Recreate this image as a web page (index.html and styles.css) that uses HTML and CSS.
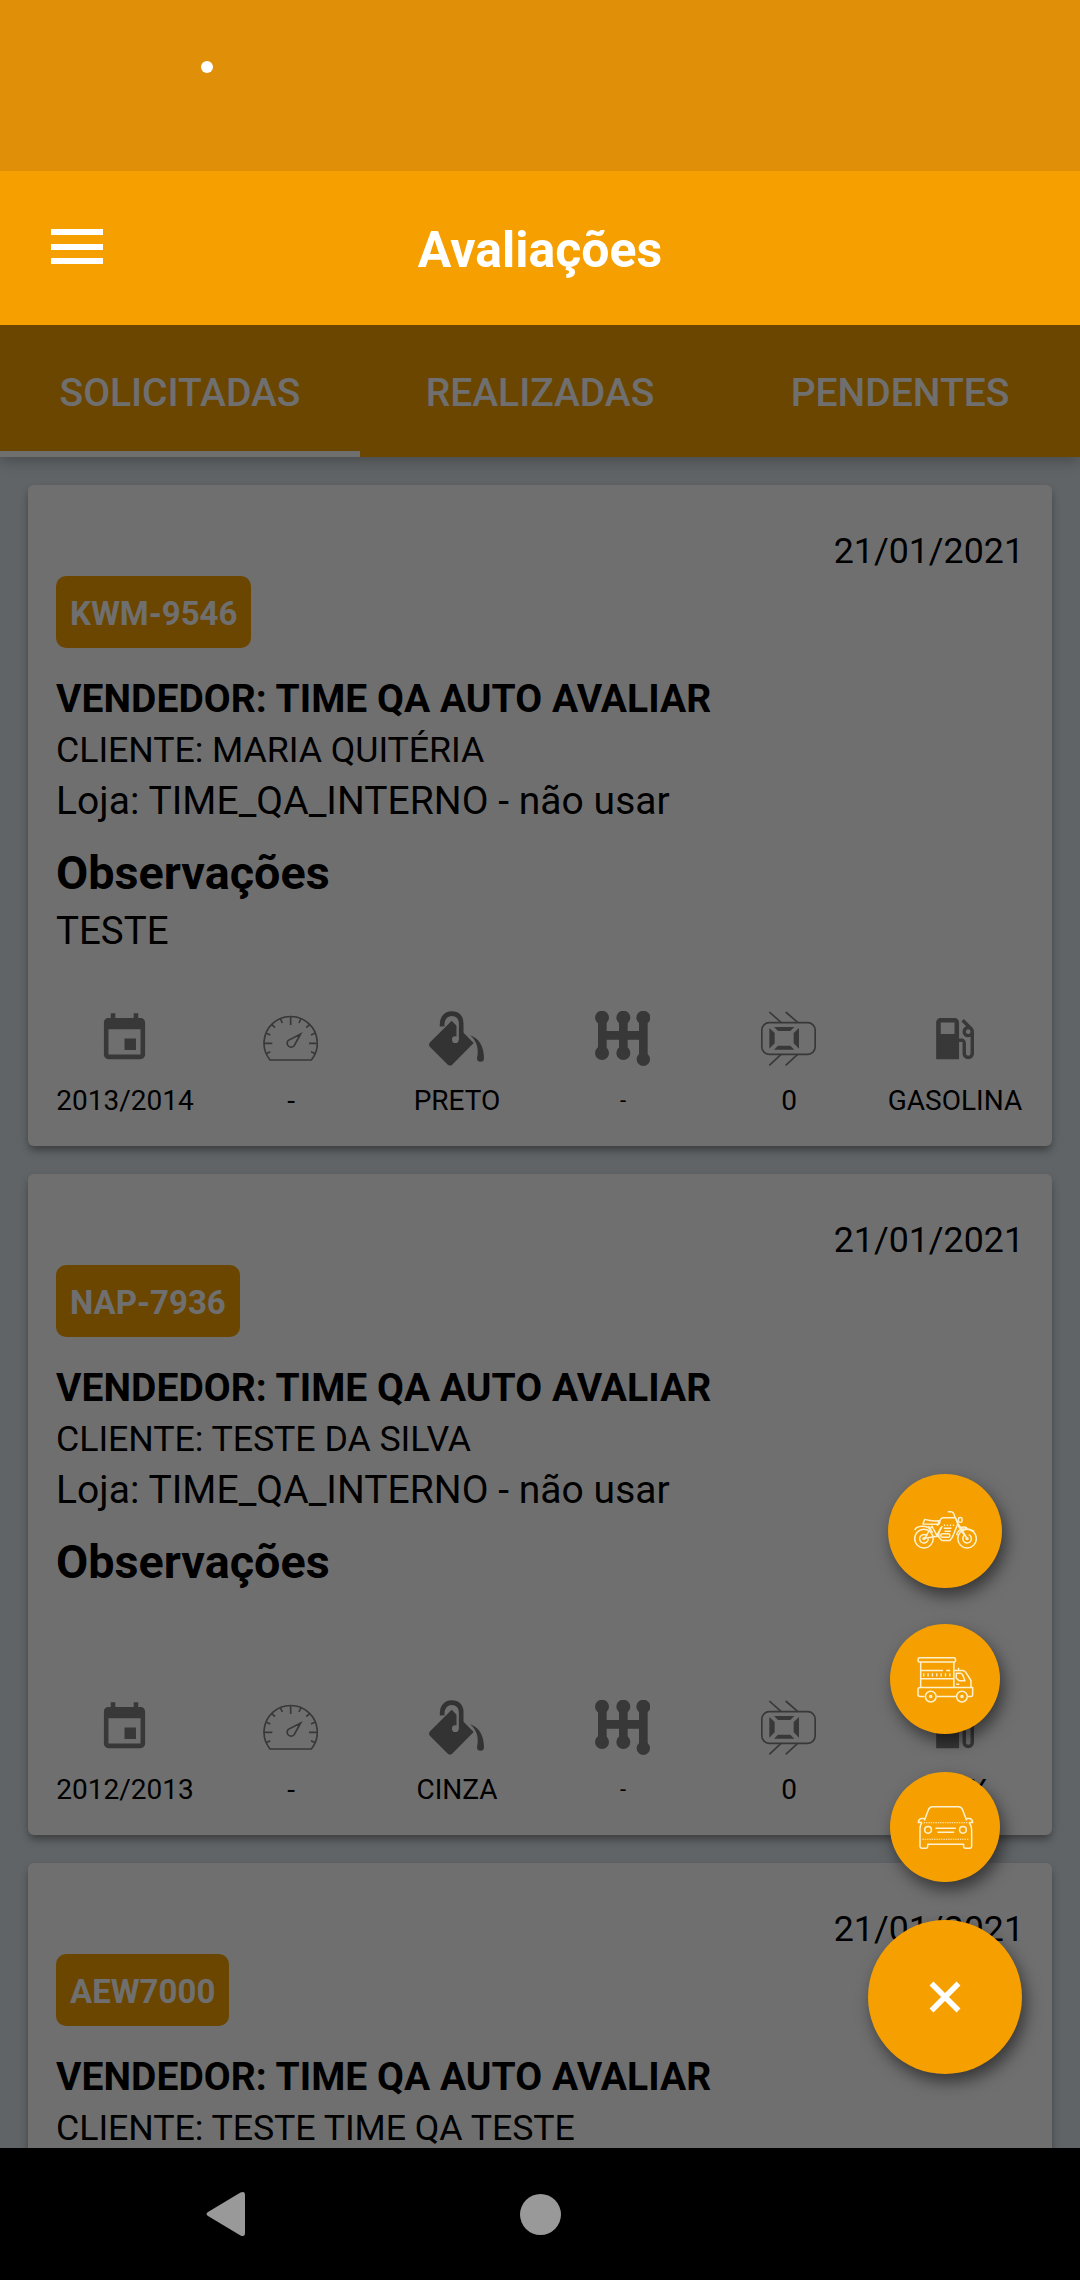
FILE: index.html
```html
<!DOCTYPE html>
<html lang="pt-BR">
<head>
<meta charset="utf-8">
<title>Avaliações</title>
<link rel="stylesheet" href="styles.css">
</head>
<body>
<svg class="defs" width="0" height="0">
  <symbol id="event" viewBox="0 0 24 24"><path fill="currentColor" d="M17 12h-5v5h5v-5zM16 1v2H8V1H6v2H5c-1.110 0-1.990.9-1.990 2L3 19c0 1.100.89 2 2 2h14c1.100 0 2-.9 2-2V5c0-1.100-.9-2-2-2h-1V1h-2zm3 18H5V8h14v11z"/></symbol>
  <symbol id="gauge" viewBox="0 0 165 165"><g fill="none" stroke="currentColor" stroke-width="5"><path d="M21 147A80 80 0 1 1 145 147Z"/><path d="M3 97h25M138 97h25M83 17v25M108 36l6-13M130 50l10-10M144 72l13-6M144 122l13 6M58 36l-6-13M36 50L26 40M22 72L9 66M22 122l-13 6M113 69L76 88A12 12 0 1 0 93 105Z"/></g></symbol>
  <symbol id="paint" viewBox="0 0 165 165"><path fill="currentColor" d="M68 29L134 96L71 160Q63 168 55 160L4 109Q-4 101 4 93Z"/><path fill="none" stroke="currentColor" stroke-width="15" d="M40 46C38 22 50 8 68 8C86 8 96 19 96 36V68"/><path fill="none" stroke="#fff" stroke-width="7" d="M50 44C50 26 58 19 68 19C80 19 86 27 86 40V86"/><circle cx="79" cy="86" r="10" fill="#fff"/><path fill="currentColor" d="M122 72C150 82 165 105 165 142A10.500 10.500 0 0 1 144 142C150 115 145 90 122 72"/></symbol>
  <symbol id="gear" viewBox="0 0 165 165"><g fill="currentColor"><circle cx="21" cy="20" r="21"/><circle cx="85" cy="20" r="21"/><circle cx="145" cy="20" r="21"/><circle cx="21" cy="126" r="21"/><circle cx="85" cy="126" r="21"/><circle cx="145" cy="145" r="20"/><path d="M9 20h26v106H9zM72 20h26v106H72zM132 20h26v125h-26zM20 60h125v26H20z"/></g></symbol>
  <symbol id="doors" viewBox="0 0 165 165"><rect x="2.500" y="35" width="160" height="95" rx="22" fill="none" stroke="currentColor" stroke-width="5"/><path fill="none" stroke="currentColor" stroke-width="5" d="M25 3L60 34M74 3L110 34M60 130L25 163M110 130L74 163"/><path fill="currentColor" d="M39 48h61L88 60H51zM51 104h37l12 12H39zM25 51l16 15v31l-16 16zM114 51L98 66v31l16 16z"/></symbol>
  <symbol id="fuel" viewBox="0 0 24 24"><path fill="currentColor" d="M19.770 7.230l.01-.01-3.720-3.720L15 4.560l2.110 2.110c-.94.36-1.610 1.260-1.610 2.330 0 1.380 1.120 2.500 2.500 2.500.36 0 .69-.08 1-.21v7.210c0 .55-.45 1-1 1s-1-.45-1-1V14c0-1.100-.9-2-2-2h-1V5c0-1.100-.9-2-2-2H6c-1.100 0-2 .9-2 2v16h10v-7.500h1.500v5c0 1.380 1.120 2.500 2.500 2.500s2.500-1.120 2.500-2.500V9c0-.69-.28-1.320-.73-1.770zM12 10H6V5h6v5zm6 0c-.55 0-1-.45-1-1s.45-1 1-1 1 .45 1 1-.45 1-1 1z"/></symbol>
</svg>

<div class="status-bar"><span class="status-dot"></span></div>

<header class="app-bar">
  <div class="menu"><span></span><span></span><span></span></div>
  <h1 class="title">Avaliações</h1>
</header>

<main class="screen">
  <nav class="tabs">
    <div class="tab active">SOLICITADAS</div>
    <div class="tab">REALIZADAS</div>
    <div class="tab">PENDENTES</div>
  </nav>

  <div class="list">
    <article class="card">
      <div class="date">21/01/2021</div>
      <div class="plate">KWM-9546</div>
      <div class="seller">VENDEDOR: TIME QA AUTO AVALIAR</div>
      <div class="client">CLIENTE: MARIA QUITÉRIA</div>
      <div class="store">Loja: TIME_QA_INTERNO - não usar</div>
      <h2 class="notes-title">Observações</h2>
      <div class="notes">TESTE</div>
      <div class="specs">
        <div class="spec"><svg><use href="#event"/></svg><span>2013/2014</span></div>
        <div class="spec"><svg><use href="#gauge"/></svg><span>-</span></div>
        <div class="spec dark"><svg><use href="#paint"/></svg><span>PRETO</span></div>
        <div class="spec"><svg><use href="#gear"/></svg><span class="small">-</span></div>
        <div class="spec"><svg><use href="#doors"/></svg><span>0</span></div>
        <div class="spec"><svg><use href="#fuel"/></svg><span>GASOLINA</span></div>
      </div>
    </article>

    <article class="card">
      <div class="date">21/01/2021</div>
      <div class="plate">NAP-7936</div>
      <div class="seller">VENDEDOR: TIME QA AUTO AVALIAR</div>
      <div class="client">CLIENTE: TESTE DA SILVA</div>
      <div class="store">Loja: TIME_QA_INTERNO - não usar</div>
      <h2 class="notes-title">Observações</h2>
      <div class="specs">
        <div class="spec"><svg><use href="#event"/></svg><span>2012/2013</span></div>
        <div class="spec"><svg><use href="#gauge"/></svg><span>-</span></div>
        <div class="spec dark"><svg><use href="#paint"/></svg><span>CINZA</span></div>
        <div class="spec"><svg><use href="#gear"/></svg><span class="small">-</span></div>
        <div class="spec"><svg><use href="#doors"/></svg><span>0</span></div>
        <div class="spec"><svg><use href="#fuel"/></svg><span>FLEX</span></div>
      </div>
    </article>

    <article class="card">
      <div class="date">21/01/2021</div>
      <div class="plate">AEW7000</div>
      <div class="seller">VENDEDOR: TIME QA AUTO AVALIAR</div>
      <div class="client">CLIENTE: TESTE TIME QA TESTE</div>
    </article>
  </div>

  <div class="scrim"></div>

  <div class="fab-menu">
    <div class="fab moto">
      <svg width="63" height="40" viewBox="160 208 190 120" fill="none" stroke="#fff1cf" stroke-width="4.500" stroke-linejoin="round">
        <circle cx="190" cy="294" r="28"/><path d="M200 286A13 13 0 1 0 203 294"/><circle cx="190" cy="294" r="3"/>
        <circle cx="320" cy="294" r="28"/><path d="M311 285A13 13 0 1 0 325 282"/><circle cx="320" cy="294" r="3"/>
        <path d="M162 268C168 254 198 252 208 266"/>
        <path d="M187 250L192 236Q212 242 236 240L232 251Z"/>
        <path d="M229 255L237 248Q238 232 248 231H285L292 250L276 289L268 300H244L235 290V276L245 256"/>
        <path d="M192 293L214 256L229 284L242 260M192 293L236 286M204 256L216 276"/>
        <path d="M262 213H272Q280 214 283 228L294 250L320 293M290 250L313 286"/>
        <rect x="294" y="230" width="11" height="15" rx="5"/>
        <path d="M300 262Q310 256 320 262M289 284C290 264 318 258 342 272"/>
        <path d="M250 254H282" stroke-dasharray="4 5"/>
        <path d="M250 263H273M252 272H271"/>
        <rect x="241" y="279" width="27" height="11" rx="5"/>
      </svg>
    </div>
    <div class="fab truck">
      <svg width="57" height="47" viewBox="170 646 170 140" fill="none" stroke="#fff1cf" stroke-width="4.500" stroke-linejoin="round">
        <rect x="173" y="651" width="112" height="13" rx="5"/>
        <path d="M181 664V740M280 664V740M183 689H248M257 689H269M183 714H278"/>
        <path d="M188 702H274" stroke-width="10" stroke-dasharray="4 9"/>
        <path d="M192 767H179Q173 767 173 761V746Q173 740 179 740H336V761Q336 767 331 767H322M286 767H229"/>
        <circle cx="211" cy="767" r="16"/><circle cx="211" cy="767" r="3"/>
        <circle cx="304" cy="767" r="16"/><circle cx="304" cy="767" r="3"/>
        <path d="M281 689H307Q312 690 315 694L331 719V740M287 697H300Q304 698 306 702L313 720H296L287 712ZM294 688V681M287 730H296"/>
      </svg>
    </div>
    <div class="fab car">
      <svg width="57" height="45" viewBox="230 194 170 134" fill="none" stroke="#fff1cf" stroke-width="4.500" stroke-linejoin="round">
        <path d="M252 240L264 208Q267 199 276 199H354Q363 199 366 208L378 240"/>
        <path d="M253 234H243Q235 235 234 246H245M377 234H387Q395 235 396 246H385"/>
        <path d="M245 246Q238 254 239 272V318Q239 323 244 323H257Q262 323 262 318V311H369V318Q369 323 374 323H388Q393 323 393 318V272Q393 254 385 246"/>
        <path d="M250 247H380M246 296H386" stroke-dasharray="4 3" stroke-width="3"/>
        <circle cx="263" cy="268" r="10"/><circle cx="367" cy="268" r="10"/>
        <path d="M285 263H346M291 275H341"/>
      </svg>
    </div>
    <div class="fab main">
      <svg width="32" height="32" viewBox="0 0 32 32" stroke="#fff" stroke-width="5.500"><path d="M2.500 2.500L29.500 29.500M29.500 2.500L2.500 29.500"/></svg>
    </div>
  </div>
</main>

<footer class="nav-bar">
  <svg width="40" height="46" viewBox="0 0 40 46" fill="#999"><path d="M34.500 1.600Q39 -0.500 39 4V42Q39 46.500 34.500 44.400L2 25Q-1 23 2 21Z"/></svg>
  <span class="home"></span>
</footer>
</body>
</html>
```
FILE: styles.css
```css
* { box-sizing: border-box; margin: 0; padding: 0; }

body {
  width: 1080px;
  height: 2280px;
  display: flex;
  flex-direction: column;
  overflow: hidden;
  background: #000;
  font-family: Roboto, "Liberation Sans", sans-serif;
  color: #000;
}

.defs { position: absolute; }

.status-bar {
  height: 171px;
  padding: 61px 0 0 201px;
  background: #e09008;
}
.status-dot {
  display: block;
  width: 12px;
  height: 12px;
  border-radius: 50%;
  background: #fff;
}

.app-bar {
  height: 154px;
  display: grid;
  grid-template-columns: 120px 1fr 120px;
  align-items: center;
  background: #f5a000;
}
.menu {
  display: flex;
  flex-direction: column;
  gap: 8.5px;
  margin: -3px 0 0 51px;
  width: 52px;
}
.menu span { height: 6px; background: #fff; }
.title {
  padding-top: 3px;
  text-align: center;
  font-size: 50px;
  line-height: 60px;
  font-weight: 700;
  color: #fff;
}

.screen {
  position: relative;
  height: 1823px;
  display: flex;
  flex-direction: column;
  overflow: hidden;
  background: #dde5ea;
}

.tabs {
  height: 132px;
  flex: none;
  display: grid;
  grid-template-columns: repeat(3, 1fr);
  background: #f5a000;
  box-shadow: 0 4px 14px rgba(0, 0, 0, .25);
}
.tab {
  padding-top: 10px;
  border-bottom: 6px solid transparent;
  text-align: center;
  line-height: 116px;
  font-size: 39px;
  font-weight: 500;
  color: #fff;
}
.tab.active { border-bottom-color: #fff; }

.list {
  flex: 1;
  display: flex;
  flex-direction: column;
  gap: 28px;
  padding: 28px;
}
.card {
  height: 661px;
  flex: none;
  display: flex;
  flex-direction: column;
  align-items: flex-start;
  padding: 45px 28px 27px;
  border-radius: 6px;
  background: #fff;
  box-shadow: 0 5px 8px -1px rgba(0, 0, 0, .4);
}
.date {
  align-self: flex-end;
  font-size: 35.75px;
  line-height: 42px;
}
.plate {
  height: 72px;
  margin-top: 4px;
  padding: 3px 14px 0;
  border-radius: 10px;
  background: #f5a000;
  font-size: 33px;
  line-height: 69px;
  font-weight: 700;
  color: #fff;
}
.seller, .client, .store {
  font-size: 39px;
  line-height: 51px;
  letter-spacing: .04px;
}
.seller { margin-top: 26px; font-weight: 700; }
.client {
  font-size: 35.75px;
  letter-spacing: -.07px;
}
.notes-title {
  margin-top: 18px;
  font-size: 46.75px;
  line-height: 56px;
}
.notes {
  margin-top: 4px;
  font-size: 38.5px;
  line-height: 52px;
}

.specs {
  align-self: stretch;
  display: grid;
  grid-template-columns: repeat(6, 166px);
  margin: auto -14px 0;
}
.spec {
  display: flex;
  flex-direction: column;
  align-items: center;
  gap: 17px;
  color: #808080;
}
.spec.dark { color: #757575; }
.spec svg { width: 55px; height: 55px; margin-right: 1px; }
.spec span {
  font-size: 28px;
  line-height: 36px;
  color: #000;
}
.spec .small { font-size: 22px; }

.scrim {
  position: absolute;
  inset: 0;
  background: rgba(0, 0, 0, .565);
}

.fab-menu {
  position: absolute;
  right: 58px;
  bottom: 74px;
  display: flex;
  flex-direction: column;
  align-items: center;
  gap: 38px;
}
.fab {
  width: 110px;
  height: 110px;
  display: flex;
  align-items: center;
  justify-content: center;
  border-radius: 50%;
  background: #f5a000;
  box-shadow: 4px 8px 16px rgba(0, 0, 0, .5);
}
.fab.moto { width: 114px; height: 114px; margin-bottom: -2px; padding-bottom: 3px; }
.fab.main { width: 154px; height: 154px; }

.nav-bar {
  height: 132px;
  display: grid;
  grid-template-columns: repeat(3, 314px);
  justify-content: center;
  align-items: center;
  justify-items: center;
  background: #000;
}
.home {
  width: 41px;
  height: 41px;
  border-radius: 50%;
  background: #999;
}
```
